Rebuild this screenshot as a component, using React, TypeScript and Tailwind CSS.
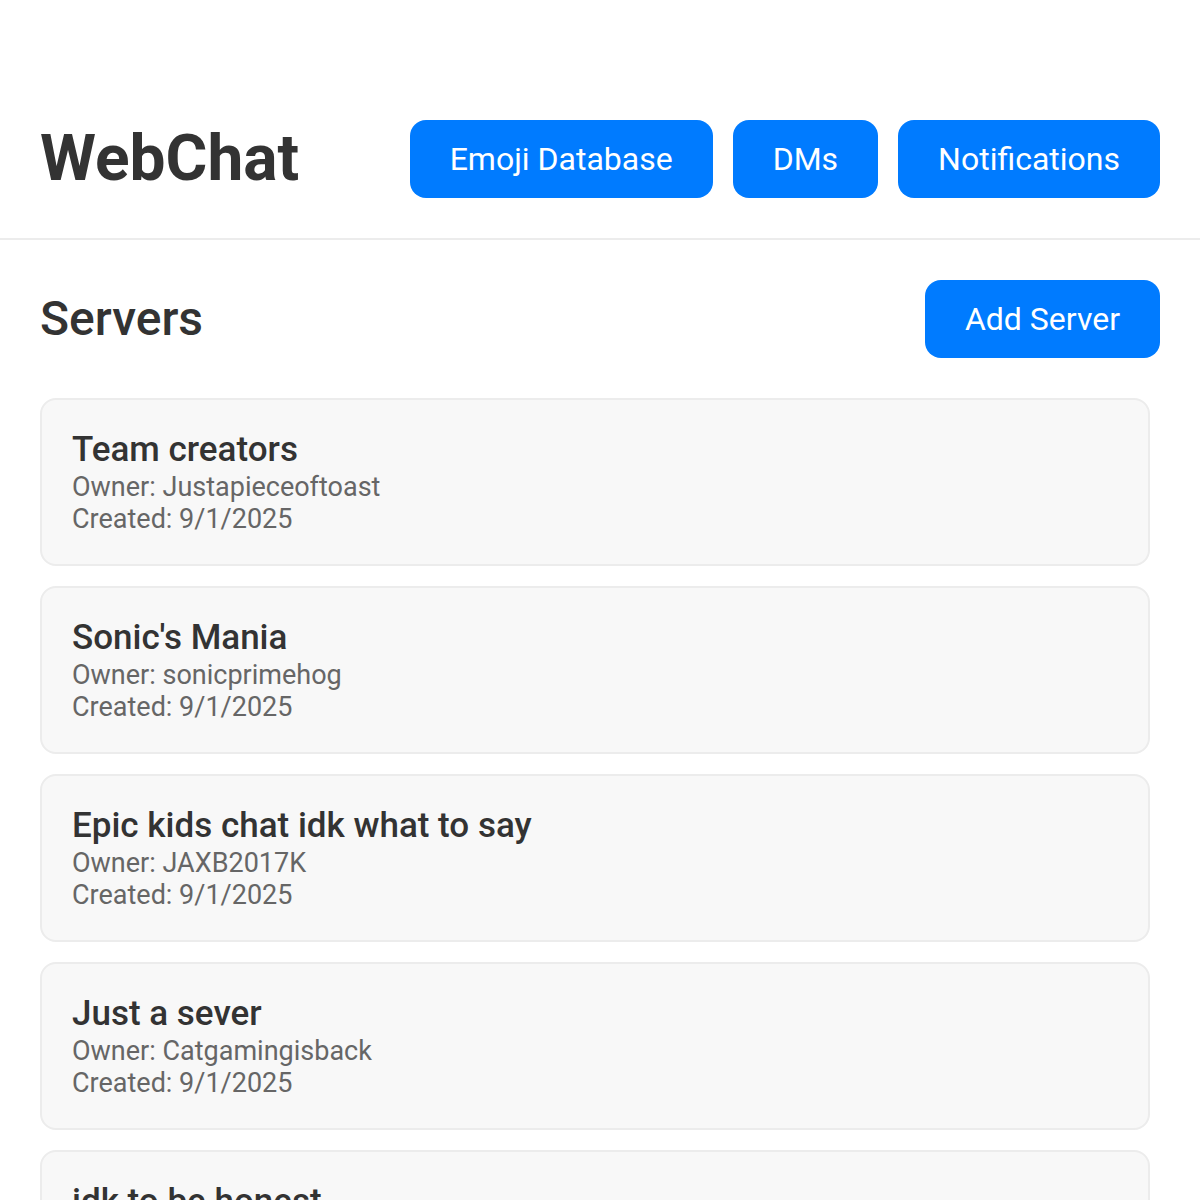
import React from "react";

type Server = { name: string; owner: string; created: string };

const servers: Server[] = [
  { name: "Team creators", owner: "Justapieceoftoast", created: "9/1/2025" },
  { name: "Sonic's Mania", owner: "sonicprimehog", created: "9/1/2025" },
  { name: "Epic kids chat idk what to say", owner: "JAXB2017K", created: "9/1/2025" },
  { name: "Just a sever", owner: "Catgamingisback", created: "9/1/2025" },
  { name: "idk to be honest", owner: "Justapieceoftoast", created: "9/1/2025" },
];

function NavButton({ label }: { label: string }) {
  return (
    <button className="bg-[#007bff] text-white rounded-[16px] px-10 py-5 text-[32px] leading-[38px] font-normal">
      {label}
    </button>
  );
}

export default function App() {
  return (
    <div className="min-h-screen bg-white text-[#333]" style={{ fontFamily: "Roboto, 'Noto Sans', sans-serif" }}>
      <header className="flex items-center justify-between px-10 pt-[120px] pb-[40px] border-b-2 border-[#ececec]">
        <h1 className="text-[64px] leading-[78px] font-bold text-[#333]">WebChat</h1>
        <nav className="flex gap-5">
          <NavButton label="Emoji Database" />
          <NavButton label="DMs" />
          <NavButton label="Notifications" />
        </nav>
      </header>

      <main className="px-10 pt-10">
        <div className="flex items-center justify-between mb-10">
          <h2 className="text-[48px] leading-[78px] font-medium text-[#333]">Servers</h2>
          <NavButton label="Add Server" />
        </div>

        <div className="flex flex-col gap-5 mr-[10px]">
          {servers.map((s) => (
            <div
              key={s.name}
              className="bg-[#f8f8f8] border-2 border-[#ececec] rounded-[16px] px-[30px] pt-[30px] pb-[29px]"
            >
              <div className="text-[35px] leading-[40px] font-medium text-[#333]">{s.name}</div>
              <div className="text-[27px] leading-[32px] pt-[1px] text-[#666]">Owner: {s.owner}</div>
              <div className="text-[27px] leading-[32px] text-[#666]">Created: {s.created}</div>
            </div>
          ))}
        </div>
      </main>
    </div>
  );
}
